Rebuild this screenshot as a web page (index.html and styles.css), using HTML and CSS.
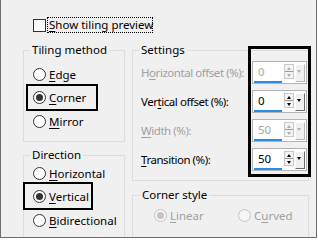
FILE: index.html
```html
<!doctype html>
<html lang="en">
<head>
    <meta charset="UTF-8">
    <link rel="stylesheet" href="styles.css">
    <title>Tiling</title>
</head>
<body>
<div class="dialog">
    <div class="preview-row">
        <span class="checkbox"></span>
        <span class="focus-label"><u>S</u>how tiling preview</span>
    </div>

    <div class="columns">
        <div class="col-left">
            <fieldset class="group method">
                <legend>Tiling method</legend>
                <div class="option"><span class="radio"></span><span><u>E</u>dge</span></div>
                <div class="option"><span class="radio on"></span><span><u>C</u>orner</span></div>
                <div class="option"><span class="radio"></span><span><u>M</u>irror</span></div>
            </fieldset>
            <fieldset class="group direction">
                <legend>Direction</legend>
                <div class="option"><span class="radio"></span><span><u>H</u>orizontal</span></div>
                <div class="option"><span class="radio on"></span><span><u>V</u>ertical</span></div>
                <div class="option"><span class="radio"></span><span><u>B</u>idirectional</span></div>
            </fieldset>
        </div>

        <div class="col-right">
            <fieldset class="group settings">
                <legend>Settings</legend>
                <div class="field-row disabled">
                    <span class="field-label">H<u>o</u>rizontal offset (%):</span>
                    <div class="spin">
                        <div class="spin-text tan">0</div>
                        <div class="spin-arrows"><span class="up"></span><span class="down"></span></div>
                        <div class="spin-drop"></div>
                    </div>
                </div>
                <div class="field-row">
                    <span class="field-label">Ver<u>t</u>ical offset (%):</span>
                    <div class="spin">
                        <div class="spin-text">0</div>
                        <div class="spin-arrows"><span class="up"></span><span class="down"></span></div>
                        <div class="spin-drop"></div>
                    </div>
                </div>
                <div class="field-row disabled">
                    <span class="field-label"><u>W</u>idth (%):</span>
                    <div class="spin">
                        <div class="spin-text">50</div>
                        <div class="spin-arrows"><span class="up"></span><span class="down"></span></div>
                        <div class="spin-drop"></div>
                    </div>
                </div>
                <div class="field-row">
                    <span class="field-label"><u>T</u>ransition (%):</span>
                    <div class="spin">
                        <div class="spin-text">50</div>
                        <div class="spin-arrows"><span class="up"></span><span class="down"></span></div>
                        <div class="spin-drop"></div>
                    </div>
                </div>
            </fieldset>
            <fieldset class="group corner">
                <legend>Corner style</legend>
                <div class="corner-options">
                    <div class="option disabled linear"><span class="radio on"></span><span><u>L</u>inear</span></div>
                    <div class="option disabled"><span class="radio"></span><span>C<u>u</u>rved</span></div>
                </div>
            </fieldset>
        </div>
    </div>

    <!-- marker boxes drawn over the dialog -->
    <div class="mark mark-corner"></div>
    <div class="mark mark-vertical"></div>
    <div class="mark mark-fields"></div>
</div>
</body>
</html>
```

FILE: styles.css
```css
* {
    box-sizing: border-box;
}

body {
    margin: 0;
    background: #fff;
    font-family: "Noto Sans", "DejaVu Sans", sans-serif;
    font-size: 11.5px;
    color: #000;
}

u {
    text-decoration-thickness: 1px;
    text-underline-offset: 2px;
}

.dialog {
    position: relative;
    width: 317px;
    height: 238px;
    overflow: hidden;
    padding-top: 17px;
    background: #f0f0f0;
    border-left: 1px solid #6e6e6e;
    border-right: 1px solid #6e6e6e;
    border-bottom: 1px solid #6e6e6e;
}

.preview-row {
    display: flex;
    align-items: center;
    height: 16px;
    padding-left: 32px;
}

.checkbox {
    width: 13px;
    height: 13px;
    background: #fff;
    border: 1px solid #333;
}

.focus-label {
    margin-left: 1px;
    padding: 0 1px;
    width: 106px;
    height: 16px;
    line-height: 14px;
    border: 1px dotted #000;
    white-space: nowrap;
}

.columns {
    display: flex;
    gap: 7px;
    margin-top: 9px;
    padding-left: 22px;
}

.group {
    margin: 0;
    border: 1px solid #dcdcdc;
    min-width: 0;
}

.group legend {
    padding: 0 2px;
    line-height: 16px;
    white-space: nowrap;
}

.col-left {
    width: 102px;
    display: flex;
    flex-direction: column;
}

.method {
    padding: 8px 0 12px 9px;
}

.method legend,
.direction legend {
    margin-left: -3px;
}

.direction {
    margin-top: 5px;
    padding: 2px 0 40px 9px;
}

.option {
    display: flex;
    align-items: center;
    gap: 3px;
    height: 16px;
    white-space: nowrap;
}

.option + .option {
    margin-top: 7.5px;
}

.radio {
    position: relative;
    width: 13px;
    height: 13px;
    border-radius: 50%;
    background: #fff;
    border: 1px solid #333;
    flex: none;
}

.radio.on::after {
    content: "";
    position: absolute;
    left: 2px;
    top: 2px;
    width: 7px;
    height: 7px;
    border-radius: 50%;
    background: #333;
}

.option.disabled {
    color: #a0a0a0;
}

.option.disabled .radio {
    border-color: #c4c4c4;
    background: #f5f5f5;
}

.option.disabled .radio.on::after {
    background: #c4c4c4;
}

.col-right {
    width: 177px;
    display: flex;
    flex-direction: column;
}

.settings {
    padding: 3px 1px 9px 8px;
}

.settings legend {
    margin-left: -2px;
}

.field-row {
    display: flex;
    align-items: center;
    justify-content: space-between;
    height: 23px;
}

.field-row + .field-row {
    margin-top: 6px;
}

.field-label {
    white-space: nowrap;
    letter-spacing: -0.45px;
}

.field-row.disabled .field-label {
    color: #a0a0a0;
}

.spin {
    display: flex;
    align-items: flex-start;
    flex: none;
    width: 55px;
    height: 23px;
    padding: 1px;
    background: #fff;
    border: 1px solid #b4b4b4;
}

.spin-text {
    width: 29px;
    height: 20px;
    padding-left: 4px;
    line-height: 18px;
    border-bottom: 2px solid #2a8be8;
}

.field-row.disabled .spin-text {
    color: #a8a8a8;
}

.spin-text.tan {
    color: #d8ad72;
}

.spin-arrows {
    display: flex;
    flex-direction: column;
    width: 10px;
    height: 15px;
    margin: 1px 1px 0 2px;
    border: 1px solid #c8c8c8;
    background: #f4f4f4;
}

.spin-arrows span {
    flex: 1;
    position: relative;
}

.spin-arrows .up {
    border-bottom: 1px solid #9a9a9a;
}

.spin-arrows .up::after,
.spin-arrows .down::after,
.spin-drop::after {
    content: "";
    position: absolute;
    left: 2px;
    border-left: 2.5px solid transparent;
    border-right: 2.5px solid transparent;
}

.spin-arrows .up::after {
    top: 2px;
    border-bottom: 3px solid #000;
}

.spin-arrows .down::after {
    top: 2px;
    border-top: 3px solid #000;
}

.spin-drop {
    position: relative;
    width: 10px;
    height: 18px;
    margin-top: 1px;
    background: #f0f0f0;
    border-top: 1px solid #fff;
    border-left: 1px solid #fff;
    border-right: 1px solid #6a6a6a;
    border-bottom: 1px solid #6a6a6a;
}

.spin-drop::after {
    top: 5px;
    left: 1px;
    border-top: 3px solid #000;
}

.field-row.disabled .spin-arrows .up::after {
    border-bottom-color: #b0b0b0;
}

.field-row.disabled .spin-arrows .down::after,
.field-row.disabled .spin-drop::after {
    border-top-color: #b0b0b0;
}

.field-row.disabled .spin-drop {
    border-right-color: #b8b8b8;
    border-bottom-color: #b8b8b8;
}

.corner {
    margin-top: 6px;
    padding: 4px 0 30px 21px;
}

.corner legend {
    margin-left: -14px;
}

.corner-options {
    display: flex;
}

.corner-options .option + .option {
    margin-top: 0;
}

.linear {
    width: 84px;
}

.mark {
    position: absolute;
    border: 2px solid #000;
}

.mark-corner {
    left: 25px;
    top: 84px;
    width: 72px;
    height: 27px;
}

.mark-vertical {
    left: 22px;
    top: 182px;
    width: 70px;
    height: 28px;
}

.mark-fields {
    left: 247px;
    top: 46px;
    width: 63px;
    height: 131px;
    border-width: 3px;
}
```
